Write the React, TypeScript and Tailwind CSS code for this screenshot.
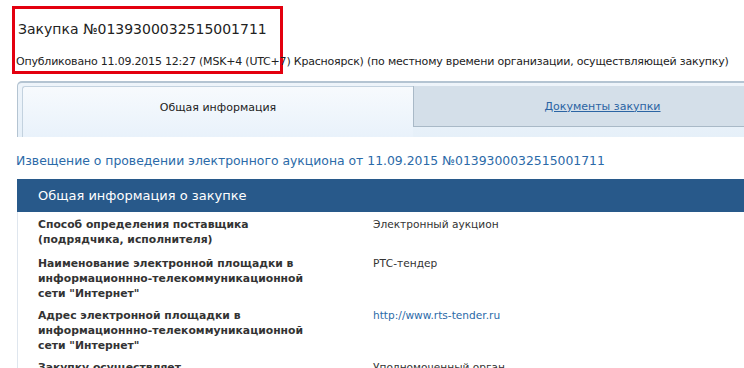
import React from "react";

const rows: { label: string; value: string; link?: boolean }[] = [
	{ label: "Способ определения поставщика (подрядчика, исполнителя)", value: "Электронный аукцион" },
	{
		label: "Наименование электронной площадки в информационнно-телекоммуникационной сети \"Интернет\"",
		value: "РТС-тендер",
	},
	{
		label: "Адрес электронной площадки в информационнно-телекоммуникационной сети \"Интернет\"",
		value: "http://www.rts-tender.ru",
		link: true,
	},
	{ label: "Закупку осуществляет", value: "Уполномоченный орган" },
];

const App = () => {
	return (
		<div className="w-[744px] h-[368px] overflow-hidden bg-white font-['DejaVu_Sans',sans-serif] text-[#333]">
			{/* шапка закупки в красной рамке */}
			<div className="pt-[6px] pl-[12px]">
				<div className="w-[271px] h-[68px] border-[3px] border-[#e3000f] relative">
					<div className="absolute left-[3px] top-[11px] text-[14px] leading-[18px] whitespace-nowrap text-[#222]">
						Закупка №0139300032515001711
					</div>
					<div className="absolute left-[1px] top-[46px] text-[11px] tracking-[-0.2px] leading-[14px] whitespace-nowrap text-[#222]">
						Опубликовано 11.09.2015 12:27 (MSK+4 (UTC+7) Красноярск) (по местному времени организации,
						осуществляющей закупку)
					</div>
				</div>
			</div>

			{/* вкладки */}
			<div className="ml-[17px] mt-[7px] w-[780px] h-[56px] rounded-tl-[5px] border-t-2 border-l border-[#b4c4d2] bg-gradient-to-b from-[#eef4fa] to-[#e6f0f9] pl-[4px] pt-[3px] flex items-start">
				<div className="w-[391px] h-[51px] rounded-tl-[3px] border-t border-l border-[#c3d2df] bg-gradient-to-b from-[#f7fafd] to-[#e9f2fb] flex items-center justify-center pb-[8px] text-[11px] text-[#222]">
					Общая информация
				</div>
				<div className="w-[378px] h-[41px] border-l border-b border-[#a9b9c7] bg-[#d4dfe9] flex items-center justify-center pt-[2px] text-[11px]">
					<span className="text-[#2b64a3] underline">Документы закупки</span>
				</div>
			</div>

			<div className="pl-[16px] pt-[16px] text-[12.4px] leading-[16px] text-[#2b6aa8] whitespace-nowrap">
				Извещение о проведении электронного аукциона от 11.09.2015 №0139300032515001711
			</div>

			<div className="ml-[17px] mt-[10px]">
				<div className="h-[33px] bg-[#28598a] flex items-center pl-[21px] text-[13px] text-white">
					Общая информация о закупке
				</div>
				<div className="border-l border-[#dfe6ee] pt-[5px]">
					{rows.map((row, i) => (
						<div key={row.label} className={`flex pl-[20px] ${i === 0 ? "pb-[9px]" : "pb-[7px]"}`}>
							<div className="w-[280px] mr-[55px] text-[10.8px] leading-[15px] font-bold text-[#333]">
								{row.label}
							</div>
							<div className={`text-[10.6px] leading-[15px] ${row.link ? "text-[#2b6aa8]" : "text-[#333]"}`}>
								{row.value}
							</div>
						</div>
					))}
				</div>
			</div>
		</div>
	);
};

export default App;
